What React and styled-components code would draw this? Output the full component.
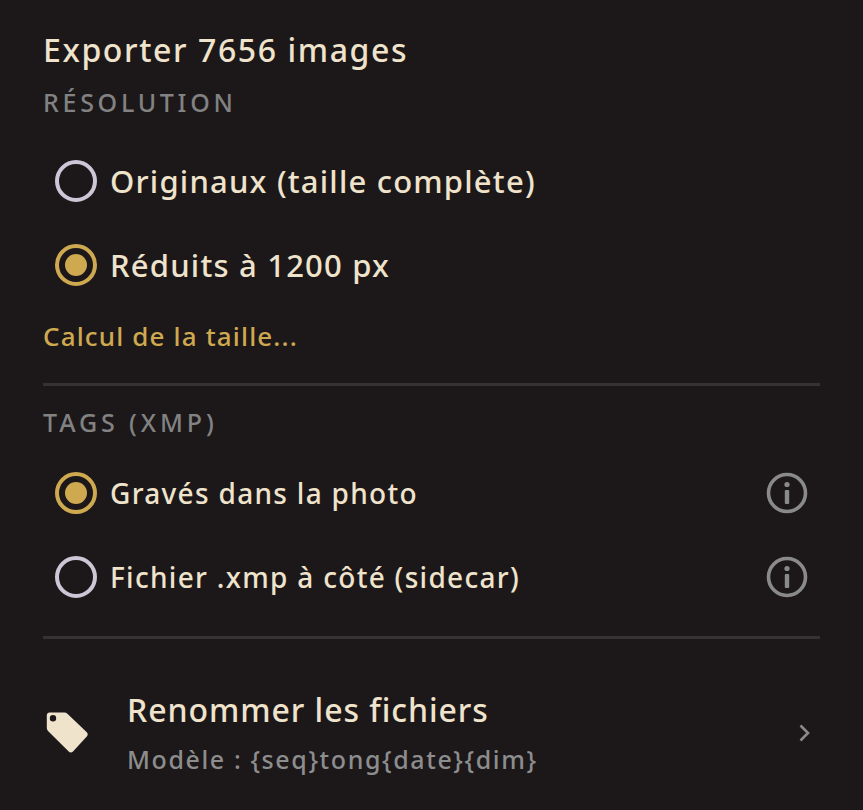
import React from "react"
import styled, { createGlobalStyle } from "styled-components"

const GlobalStyle = createGlobalStyle`
  html, body {
    margin: 0;
    padding: 0;
    background: #1c181a;
  }
`

const resolutions = [
  { label: "Originaux (taille complète)", checked: false },
  { label: "Réduits à 1200 px", checked: true },
]

const tagModes = [
  { label: "Gravés dans la photo", checked: true },
  { label: "Fichier .xmp à côté (sidecar)", checked: false },
]

const Radio = ({ checked }) => (
  <RadioRing checked={checked}>{checked && <RadioDot />}</RadioRing>
)

const InfoIcon = () => (
  <svg width="48" height="48" viewBox="0 0 48 48" fill="none">
    <circle cx="24" cy="24" r="18.5" stroke="#8a8a8a" strokeWidth="3.6" />
    <circle cx="24" cy="15.5" r="2.6" fill="#8a8a8a" />
    <rect x="21.8" y="21" width="4.4" height="14" rx="1" fill="#8a8a8a" />
  </svg>
)

const TagIcon = () => (
  <svg width="46" height="46" viewBox="0 0 46 46">
    <path
      fillRule="evenodd"
      fill="#efe3cc"
      d="M6.500 2.500H21.500c1.100 0 2.100.4 2.900 1.200L43.800 22.300c1.200 1.200 1.200 3.100 0 4.300L30 41.600c-1.200 1.200-3.100 1.200-4.300 0L5 21c-.8-.8-1.200-1.800-1.200-2.900V5.200c0-1.500 1.200-2.700 2.700-2.700zM10 5a3.200 3.200 0 1 0 0 6.400 3.200 3.200 0 0 0 0-6.400z"
    />
  </svg>
)

const ChevronIcon = () => (
  <svg width="14" height="20" viewBox="0 0 14 20" fill="none">
    <path d="M2.500 2.500L10 10l-7.500 7.500" stroke="#8a8a8a" strokeWidth="2.600" />
  </svg>
)

const App = () => {
  return (
    <Page>
      <GlobalStyle />
      <Title>Exporter 7656 images</Title>
      <SectionLabel>Résolution</SectionLabel>
      <OptionList>
        {resolutions.map(r => (
          <Option key={r.label}>
            <Radio checked={r.checked} />
            <OptionLabel large>{r.label}</OptionLabel>
          </Option>
        ))}
      </OptionList>
      <SizeNote>Calcul de la taille...</SizeNote>
      <Divider />
      <SectionLabel tight>Tags (XMP)</SectionLabel>
      <OptionList compact>
        {tagModes.map(t => (
          <Option key={t.label}>
            <Radio checked={t.checked} />
            <OptionLabel>{t.label}</OptionLabel>
            <InfoSlot>
              <InfoIcon />
            </InfoSlot>
          </Option>
        ))}
      </OptionList>
      <Divider second />
      <RenameRow>
        <TagSlot>
          <TagIcon />
        </TagSlot>
        <RenameText>
          <RenameTitle>Renommer les fichiers</RenameTitle>
          <RenameSub>Modèle : {"{seq}tong{date}{dim}"}</RenameSub>
        </RenameText>
        <ChevronSlot>
          <ChevronIcon />
        </ChevronSlot>
      </RenameRow>
    </Page>
  )
}

export default App

const Page = styled.div`
  width: 863px;
  height: 810px;
  box-sizing: border-box;
  padding: 28px 43px 0;
  overflow: hidden;
  background: #1c181a;
  font-family: "Noto Sans", "Open Sans", sans-serif;
  font-weight: 500;
  color: #efe3cc;
`

const Title = styled.div`
  font-size: 32px;
  line-height: 44px;
  letter-spacing: 1.6px;
`

const SectionLabel = styled.div`
  margin-top: ${p => (p.tight ? "18px" : "12px")};
  font-size: 25px;
  line-height: 36px;
  letter-spacing: ${p => (p.tight ? "3.9px" : "3.7px")};
  text-transform: uppercase;
  color: #828282;
`

const OptionList = styled.div`
  display: flex;
  flex-direction: column;
  margin-top: ${p => (p.compact ? "11px" : "19px")};
`

const Option = styled.div`
  display: flex;
  align-items: center;
  height: 84px;
  padding-left: 12px;
`

const RadioRing = styled.span`
  flex: none;
  display: flex;
  align-items: center;
  justify-content: center;
  width: 42px;
  height: 42px;
  box-sizing: border-box;
  border-radius: 50%;
  border: 4px solid ${p => (p.checked ? "#cfa950" : "#cbc7d6")};
`

const RadioDot = styled.span`
  width: 22px;
  height: 22px;
  border-radius: 50%;
  background: #cfa950;
`

const OptionLabel = styled.span`
  margin-left: 13px;
  font-size: ${p => (p.large ? "31px" : "28px")};
  letter-spacing: ${p => (p.large ? "1.2px" : "1.3px")};
  white-space: nowrap;
`

const InfoSlot = styled.span`
  display: flex;
  margin-left: auto;
  margin-right: 9px;
`

const SizeNote = styled.div`
  margin-top: 10px;
  font-size: 26px;
  line-height: 38px;
  letter-spacing: 1.15px;
  color: #cfa950;
`

const Divider = styled.div`
  height: 3px;
  margin-top: ${p => (p.second ? "17px" : "28px")};
  background: #353233;
`

const RenameRow = styled.div`
  display: flex;
  align-items: center;
  margin-top: 50px;
`

const TagSlot = styled.span`
  display: flex;
  flex: none;
  width: 84px;
`

const RenameText = styled.div`
  display: flex;
  flex-direction: column;
  gap: 10px;
`

const RenameTitle = styled.div`
  font-size: 32px;
  line-height: 42px;
  letter-spacing: 0.95px;
`

const RenameSub = styled.div`
  font-size: 25px;
  line-height: 36px;
  letter-spacing: 1.6px;
  color: #8d8d8d;
`

const ChevronSlot = styled.span`
  display: flex;
  margin-left: auto;
  padding-right: 8px;
`
